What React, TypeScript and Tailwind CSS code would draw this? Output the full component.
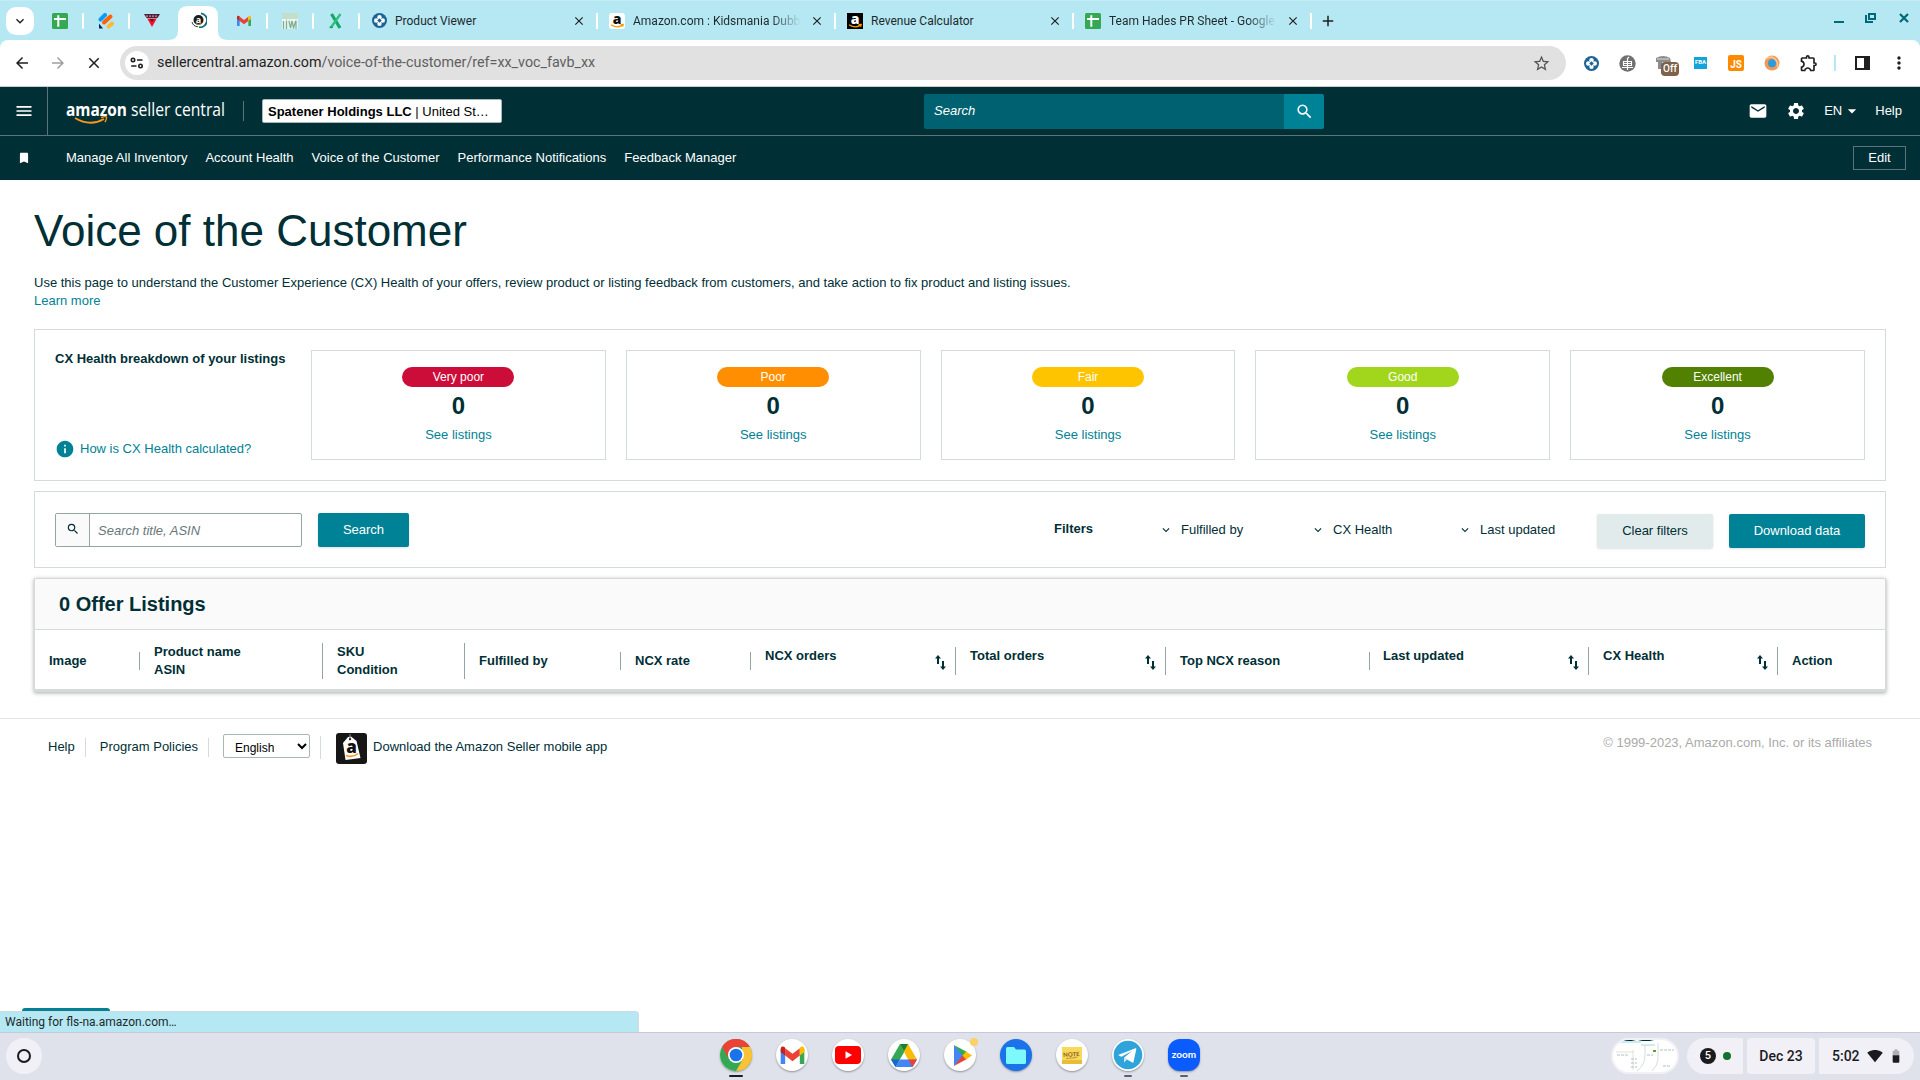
import React from 'react';
import { MdArrowBack, MdArrowForward, MdClose, MdMail, MdSettings, MdSearch, MdMenu, MdBookmark, MdStarBorder, MdMoreVert, MdAdd, MdKeyboardArrowDown, MdInfo, MdOutlineExtension, MdSignalWifi4Bar, MdBattery60, MdArrowDropDown } from 'react-icons/md';

const HEALTH = [
  { label: 'Very poor', color: 'bg-[#cc0c39]' },
  { label: 'Poor', color: 'bg-[#ff8f00]' },
  { label: 'Fair', color: 'bg-[#ffc400]' },
  { label: 'Good', color: 'bg-[#a2d61c]' },
  { label: 'Excellent', color: 'bg-[#528000]' },
];

const COLUMNS = [
  { lines: ['Image'], width: 'w-[105px] pl-[14px]', bar: 'h-[18px]' },
  { lines: ['Product name', 'ASIN'], width: 'w-[183px] pl-[14px]', bar: 'h-9' },
  { lines: ['SKU', 'Condition'], width: 'w-[142px] pl-[14px]', bar: 'h-9' },
  { lines: ['Fulfilled by'], width: 'w-[156px] pl-[14px]', bar: 'h-[18px]' },
  { lines: ['NCX rate'], width: 'w-[130px] pl-[14px]', bar: 'h-[18px]' },
  { lines: ['NCX orders'], width: 'w-[205px] pl-[14px]', bar: 'h-7', sort: true },
  { lines: ['Total orders'], width: 'w-[210px] pl-[14px]', bar: 'h-7', sort: true },
  { lines: ['Top NCX reason'], width: 'w-[204px] pl-[14px]', bar: 'h-[18px]' },
  { lines: ['Last updated'], width: 'w-[219px] pl-[13px]', bar: 'h-7', sort: true },
  { lines: ['CX Health'], width: 'w-[189px] pl-[14px]', bar: 'h-7', sort: true },
  { lines: ['Action'], width: 'w-[107px] pl-[14px]', bar: '' },
];

const NAV = ['Manage All Inventory', 'Account Health', 'Voice of the Customer', 'Performance Notifications', 'Feedback Manager'];

const SheetsIcon = () => (
  <svg width="16" height="16" viewBox="0 0 16 16">
    <rect width="16" height="16" rx="1.5" fill="#34a853" />
    <path d="M2 6h12M6.3 2.3v11.4" stroke="#fff" strokeWidth="2" />
  </svg>
);

const StripesIcon = () => (
  <svg width="16" height="16" viewBox="0 0 16 16" strokeLinecap="round">
    <path d="M2.500 6.500L7 2" stroke="#0a9cff" strokeWidth="4" />
    <path d="M6 9.500L12.500 3.500" stroke="#ff6200" strokeWidth="4" />
    <path d="M10.500 13.500L14 10.500" stroke="#ffb92e" strokeWidth="3.800" />
    <path d="M1 10.500L5 15.500H1z" fill="#0a2463" />
  </svg>
);

const TriangleIcon = () => (
  <svg width="16" height="16" viewBox="0 0 16 16">
    <path d="M0 1h16l-2.500 4h-11z" fill="#47213f" />
    <path d="M2 3.200h12" stroke="#e08b86" strokeWidth="1.200" strokeDasharray="2 1" />
    <path d="M3.200 5.500h9.600L8 14z" fill="#f5102c" />
    <path d="M5.500 6h5L8 9z" fill="#5c1a2c" />
  </svg>
);

const SellerIcon = () => (
  <svg width="16" height="16" viewBox="0 0 16 16">
    <circle cx="7.500" cy="8" r="5" fill="#1d1d1d" />
    <path d="M10 1.300A7 7 0 0 1 8 15.200" stroke="#12707c" strokeWidth="1.800" fill="none" />
    <path d="M1 10a7 6 0 0 0 6 4.800" stroke="#25424a" strokeWidth="1" fill="none" />
    <text x="7.500" y="10.800" fontSize="9" fontWeight="700" fontFamily="Open Sans, sans-serif" fill="#fff" textAnchor="middle">a</text>
    <path d="M4.500 11.500q3 2 6 0" stroke="#d08b3c" strokeWidth="1" fill="none" />
  </svg>
);

const GmailIcon = ({ size = 16 }: { size?: number }) => (
  <svg width={size} height={size} viewBox="0 0 24 24">
    <path d="M1.500 6v13.500h4V11z" fill="#4285f4" />
    <path d="M22.500 6v13.500h-4V11z" fill="#34a853" />
    <path d="M5.500 5.500v6.500L12 17l6.500-5V5.500L12 10.500z" fill="#ea4335" />
    <path d="M1.500 6.300C1.500 3.500 4 3.500 5.500 5v7l-4-3z" fill="#c5221f" />
    <path d="M22.500 6.300c0-2.800-2.500-2.800-4-1.300v7l4-3z" fill="#fbbc04" />
  </svg>
);

const GrassIcon = () => (
  <svg width="16" height="16" viewBox="0 0 16 16">
    <rect width="16" height="16" fill="#e6f4ee" />
    <rect width="16" height="6" fill="#c3dfc9" />
    <path d="M1.500 8v8M4.500 6v10M7 8l1.500 7L10 8l1.500 7L14 7v9" stroke="#7cae92" strokeWidth="1.200" fill="none" />
    <path d="M0 7h6M10 7h5" stroke="#fff" />
  </svg>
);

const XIcon = () => (
  <svg width="16" height="16" viewBox="0 0 16 16">
    <path d="M3.500 1L12 15" stroke="#14a867" strokeWidth="3.200" />
    <path d="M12.500 1L2.500 15" stroke="#28c07b" strokeWidth="2.200" />
    <path d="M1.500 14.300h3.500" stroke="#14a867" strokeWidth="1.400" />
  </svg>
);

const FlowerIcon = () => (
  <svg width="15" height="15" viewBox="0 0 15 15">
    <circle cx="7.500" cy="7.500" r="7.500" fill="#1d6496" />
    <g fill="#fff">
      <circle cx="7.500" cy="4.200" r="2.200" />
      <circle cx="7.500" cy="10.800" r="2.200" />
      <circle cx="4.200" cy="7.500" r="2.200" />
      <circle cx="10.800" cy="7.500" r="2.200" />
    </g>
    <path d="M7.500 5.500v4M5.500 7.500h4" stroke="#1d6496" strokeWidth="1.200" />
  </svg>
);

const AmazonIcon = ({ dark = false }: { dark?: boolean }) => (
  <svg width="16" height="16" viewBox="0 0 16 16">
    <rect width="16" height="16" rx={dark ? 0 : 3} fill={dark ? '#000' : '#fff'} />
    <text x="8" y="10.500" fontSize="14" fontWeight="800" fontFamily="Open Sans, sans-serif" fill={dark ? '#fff' : '#111'} textAnchor="middle">a</text>
    <path d="M2 11.800q6 3.800 11 .6M11.500 11.600l2.700-.2-.7 2.300" stroke="#ff9900" strokeWidth="1.300" fill="none" />
  </svg>
);

const PINNED = [
  { icon: <SheetsIcon />, bar: true },
  { icon: <StripesIcon />, bar: true },
  { icon: <TriangleIcon />, bar: false },
  { icon: <SellerIcon />, active: true },
  { icon: <GmailIcon />, bar: true },
  { icon: <GrassIcon />, bar: true },
  { icon: <XIcon />, bar: true },
];

const TABS = [
  { icon: <FlowerIcon />, title: 'Product Viewer', fade: false },
  { icon: <AmazonIcon />, title: 'Amazon.com : Kidsmania Dubble', fade: true },
  { icon: <AmazonIcon dark />, title: 'Revenue Calculator', fade: false },
  { icon: <SheetsIcon />, title: 'Team Hades PR Sheet - Google S', fade: true },
];

const TabStrip = () => (
  <div className="flex h-10 items-center border-t border-[#c2ecf5] bg-[#b5e8f3] pl-1.5">
    <button className="mr-[4px] flex h-7 w-7 items-center justify-center rounded-[10px] bg-white">
      <MdKeyboardArrowDown className="h-4 w-4 text-[#1f1f1f]" />
    </button>
    {PINNED.map((tab, i) =>
      tab.active ? (
        <div key={i} className="relative flex h-[34px] w-[46px] items-center justify-center self-end">
          <svg className="absolute bottom-0 -left-[8px]" width="60" height="34" viewBox="0 0 60 34">
            <path d="M0 34q10 0 10-9V10Q10 0 20 0h20q10 0 10 10v15q0 9 10 9z" fill="#fff" />
          </svg>
          <span className="relative -top-[3px]">{tab.icon}</span>
        </div>
      ) : (
        <div key={i} className="flex w-[46px] items-center justify-between">
          <span className="ml-[14px] shrink-0">{tab.icon}</span>
          {tab.bar && <span className="h-4 w-[2px] rounded bg-white" />}
        </div>
      )
    )}
    {TABS.map((tab) => (
      <div key={tab.title} className="flex h-4 w-[238px] items-center border-r-2 border-white pl-[11px]">
        <span className="flex w-4 shrink-0 justify-center">{tab.icon}</span>
        <span className={`ml-2 w-[168px] overflow-hidden whitespace-nowrap text-xs text-[#1f2a2d] ${tab.fade ? '[mask-image:linear-gradient(to_right,black_138px,transparent_168px)]' : ''}`}>
          {tab.title}
        </span>
        <MdClose className="ml-[9px] h-3.5 w-3.5 shrink-0 text-[#1f1f1f]" />
      </div>
    ))}
    <MdAdd className="ml-[7px] h-[18px] w-[18px] text-[#1f1f1f]" />
    <div className="mr-2.5 -mt-[5px] ml-auto flex items-center gap-[21px] text-[#006876]">
      <span className="mt-[8px] h-[2px] w-[10px] bg-[#006876]" />
      <svg width="12" height="12" viewBox="0 0 12 12" fill="none" stroke="#006876" strokeWidth="2">
        <path d="M4 2h6v5H4z" />
        <path d="M1 3v7h7" />
      </svg>
      <svg width="12" height="12" viewBox="0 0 12 12" stroke="#006876" strokeWidth="2.200">
        <path d="M2 2l8 8M10 2l-8 8" />
      </svg>
    </div>
  </div>
);

const Toolbar = () => (
  <div className="bg-[#b5e8f3]">
    <div className="flex h-[47px] items-center rounded-t-lg border-b border-[#c9cccd] bg-white pl-[13px]">
      <MdArrowBack className="h-[18px] w-[18px] text-[#1f1f1f]" />
      <MdArrowForward className="ml-[18px] h-[18px] w-[18px] text-[#a0a0a0]" />
      <MdClose className="ml-[18px] h-[18px] w-[18px] text-[#1f1f1f]" />
      <div className="ml-[17px] flex h-[34px] w-[1446px] items-center rounded-full bg-[#e1e1e1] pr-[15px] pl-[5px]">
        <span className="flex h-6 w-6 items-center justify-center rounded-full bg-white">
          <svg width="14" height="12" viewBox="0 0 14 12" fill="none" stroke="#1f1f1f" strokeWidth="1.600">
            <circle cx="3" cy="3" r="1.700" />
            <path d="M7 3h5.500M1.200 9h5.300" />
            <circle cx="10.500" cy="9" r="1.700" />
          </svg>
        </span>
        <span className="ml-2 text-[14.300px] text-[#5f5f5f]">
          <span className="text-[#1f1f1f]">sellercentral.amazon.com</span>/voice-of-the-customer/ref=xx_voc_favb_xx
        </span>
        <MdStarBorder className="ml-auto h-[19px] w-[19px] text-[#555]" />
      </div>
      <div className="ml-[18px] flex items-center">
        <FlowerIcon />
        <svg className="ml-5" width="17" height="17" viewBox="0 0 17 17">
          <circle cx="8.500" cy="8.500" r="8.200" fill="#717171" />
          <path d="M4.500 6.500h8v4h-8zM8.500 4v11M3 12.500h11M4.500 8.500h8M8 4l2-2" stroke="#fff" fill="none" strokeWidth="1.100" />
        </svg>
        <div className="relative ml-[19px] h-4 w-5">
          <svg width="20" height="16" viewBox="0 0 20 16">
            <path d="M1 3q7-4 14 0l1 4H7v7H3V7H1z" fill="#8c8c8c" />
            <path d="M2 4h12" stroke="#ddd" />
          </svg>
          <span className="absolute top-[7px] left-[6px] rounded bg-[#7d6148] px-[2px] text-[10px] leading-[14px] font-medium text-white">Off</span>
        </div>
        <span className="ml-[19px] h-[12px] w-[13px] overflow-hidden bg-[#12a5dc] text-center text-[6px] leading-[9px] font-bold text-white">FBA</span>
        <span className="ml-[21px] flex h-4 w-4 items-end justify-center rounded-xs bg-[#ff8a00] text-[10px] leading-[13px] font-bold text-white">JS</span>
        <svg className="ml-5" width="16" height="16" viewBox="0 0 16 16">
          <circle cx="8" cy="8" r="7.500" fill="#f29a52" />
          <circle cx="8" cy="8.300" r="4" fill="#2d9be0" />
          <path d="M2 4q5-4 9 0t2 8" stroke="#f9cb98" strokeWidth="1.500" fill="none" />
        </svg>
        <MdOutlineExtension className="ml-[19px] h-5 w-5 text-[#1f1f1f]" />
        <span className="ml-[15px] h-4 w-[2px] bg-[#b5e8f3]" />
        <svg className="ml-[19px]" width="15" height="14" viewBox="0 0 15 14">
          <rect x="1" y="1" width="13" height="12" fill="none" stroke="#1f1f1f" strokeWidth="2" />
          <path d="M9 1h5v12H9z" fill="#1f1f1f" />
        </svg>
        <MdMoreVert className="ml-[19px] h-5 w-5 text-[#1f1f1f]" />
      </div>
    </div>
  </div>
);

const Header = () => (
  <div className="h-[93px] bg-[#002f36] text-[13px] text-white">
    <div className="flex h-[49px] items-center border-b border-[#5d7378]">
      <div className="flex h-full w-12 items-center justify-center border-r border-[#5d7378]">
        <MdMenu className="h-5 w-5" />
      </div>
      <svg className="ml-[18px]" width="160" height="30" viewBox="0 0 160 30">
        <text x="0" y="20" fontFamily="Open Sans, sans-serif" fontSize="17" fontWeight="700" fill="#fff" textLength="61" lengthAdjust="spacingAndGlyphs">amazon</text>
        <text x="65" y="20" fontFamily="Open Sans, sans-serif" fontSize="18" fill="#fff" textLength="94" lengthAdjust="spacingAndGlyphs">seller central</text>
        <path d="M9 22q15 9 29 1" stroke="#f7981d" strokeWidth="2" fill="none" />
        <path d="M35 21.500q5-1.500 5.500-.4t-1.500 5" stroke="#f7981d" strokeWidth="1.400" fill="none" />
      </svg>
      <span className="ml-[17px] h-5 w-px bg-[#5d7378]" />
      <div className="ml-[18px] h-6 w-[240px] rounded-xs border border-[#aab7b8] bg-white pl-[5px] text-[13px] leading-[24px] text-black">
        <b>Spatener Holdings LLC</b> | United St…
      </div>
      <div className="ml-[422px] flex h-[35px] w-[400px]">
        <div className="flex w-[360px] items-center rounded-l-xs bg-[#006170] pl-2.5 italic">Search</div>
        <div className="flex w-10 items-center justify-center rounded-r-xs bg-[#008296]">
          <MdSearch className="h-[19px] w-[19px]" />
        </div>
      </div>
      <div className="mr-[18px] ml-auto flex items-center">
        <MdMail className="h-5 w-5" />
        <MdSettings className="ml-[18px] h-5 w-5" />
        <span className="ml-[18px]">EN</span>
        <MdArrowDropDown className="h-5 w-5" />
        <span className="ml-[13px]">Help</span>
      </div>
    </div>
    <div className="flex h-11 items-center">
      <MdBookmark className="ml-[17px] h-3.5 w-3.5" />
      <div className="ml-[35px] flex gap-[18px]">
        {NAV.map((item) => (
          <a key={item}>{item}</a>
        ))}
      </div>
      <button className="mr-3.5 ml-auto h-6 w-[53px] border border-[#5d7378]">Edit</button>
    </div>
  </div>
);

const HealthPanel = () => (
  <section className="mt-[19px] flex h-[152px] border border-[#d5dbdb] p-5">
    <div className="flex w-[256px] flex-col justify-between">
      <h2 className="font-bold leading-[18px]">CX Health breakdown of your listings</h2>
      <a className="mb-px flex items-center text-[#008296]">
        <MdInfo className="mr-[5px] h-5 w-5" />
        How is CX Health calculated?
      </a>
    </div>
    <div className="grid flex-1 grid-cols-5 gap-5">
      {HEALTH.map((item) => (
        <div key={item.label} className="flex flex-col items-center border border-[#d5dbdb] pt-4">
          <span className={`h-5 w-[112px] rounded-full text-center text-xs leading-5 text-white ${item.color}`}>{item.label}</span>
          <span className="mt-[5px] text-[24px] leading-[28px] font-bold">0</span>
          <a className="mt-[6px] leading-[18px] text-[#008296]">See listings</a>
        </div>
      ))}
    </div>
  </section>
);

const FilterItem = ({ label, className }: { label: string; className: string }) => (
  <div className={`flex items-center pt-px ${className}`}>
    <MdKeyboardArrowDown className="mr-2 h-3.5 w-3.5" />
    {label}
  </div>
);

const FilterBar = () => (
  <section className="mt-2.5 flex h-[77px] items-center border border-[#d5dbdb] px-5">
    <div className="flex h-[34px] w-[247px] rounded-xs border border-[#95a5a6]">
      <div className="flex w-[34px] items-center justify-center border-r border-[#95a5a6] bg-[#fafafa]">
        <MdSearch className="-mt-0.5 h-3.5 w-3.5" />
      </div>
      <span className="pl-2 leading-[33px] text-[#687778] italic">Search title, ASIN</span>
    </div>
    <button className="ml-4 h-[34px] w-[91px] rounded-xs bg-[#008296] text-white shadow-sm">Search</button>
    <div className="ml-auto flex h-[34px] items-center">
      <b className="w-[105px] -mt-0.5">Filters</b>
      <FilterItem label="Fulfilled by" className="w-[152px]" />
      <FilterItem label="CX Health" className="w-[147px]" />
      <FilterItem label="Last updated" className="w-[139px]" />
      <button className="mt-0.5 h-[34px] w-[116px] rounded-xs bg-[#e1ebeb] shadow-sm">Clear filters</button>
      <button className="mt-0.5 ml-4 h-[34px] w-[136px] rounded-xs bg-[#008296] text-white shadow-sm">Download data</button>
    </div>
  </section>
);

const SortIcon = () => (
  <svg className="mt-1 mr-[9px]" width="11" height="15" viewBox="0 0 11 15" fill="#002f36">
    <path d="M3 0l3 3.500H4V9H2V3.500H0z" />
    <path d="M8 15l-3-3.500h2V6h2v5.500h2z" />
  </svg>
);

const ListingsTable = () => (
  <section className="mt-2.5 h-[114px] border border-b-[3px] border-[#d5dbdb] shadow-[0_1px_4px_rgba(0,0,0,0.35)]">
    <h2 className="h-[51px] border-b border-[#d5dbdb] bg-[#fafafa] pl-6 text-[20px] leading-[50px] font-bold">0 Offer Listings</h2>
    <div className="flex h-[61px] items-center font-bold">
      {COLUMNS.map((col) => (
        <div key={col.lines[0]} className={`flex shrink-0 items-center justify-between ${col.width}`}>
          <div className={`leading-[18px] ${col.sort ? '-mt-[9px]' : 'mt-px'}`}>
            {col.lines.map((line) => (
              <div key={line}>{line}</div>
            ))}
          </div>
          <div className="flex items-center">
            {col.sort && <SortIcon />}
            {col.bar && <span className={`w-px bg-[#95a5a6] ${col.bar}`} />}
          </div>
        </div>
      ))}
    </div>
  </section>
);

const Footer = () => (
  <footer className="mt-[26px] flex h-[60px] border-t border-[#e2e4e4] pl-12 text-[13px] text-[#002f36]">
    <div className="flex h-14 items-center">
      <span>Help</span>
      <span className="ml-2.5 h-[19px] w-px bg-[#d5dbdb]" />
      <span className="ml-[14px]">Program Policies</span>
      <span className="ml-2.5 h-[19px] w-px bg-[#d5dbdb]" />
      <div className="mb-[2px] ml-[14px] flex h-6 w-[87px] items-center justify-between rounded-xs border border-[#aab7b8] pt-1 pr-0.5 pl-[11px] text-xs text-black">
        <span className="h-[16px] overflow-hidden">English</span>
        <svg className="mb-1" width="10" height="7" viewBox="0 0 10 7" fill="none" stroke="#000" strokeWidth="2">
          <path d="M1 1l4 4 4-4" />
        </svg>
      </div>
      <span className="ml-2.5 h-[23px] w-px bg-[#d5dbdb]" />
      <svg className="mt-0.5 ml-[15px]" width="31" height="31" viewBox="0 0 31 31">
        <rect width="31" height="31" rx="3" fill="#161616" />
        <path d="M7 10l5-6 3-.5 5.500 4.500 4 17-15 2z" fill="#fff" />
        <circle cx="14" cy="6" r="1.200" fill="#161616" />
        <path d="M14 6V1" stroke="#888" strokeWidth="1" />
        <text x="15.500" y="20" fontSize="17" fontWeight="800" fontFamily="Open Sans, sans-serif" fill="#111" textAnchor="middle">a</text>
        <path d="M10 22.500q7 2.500 12-2" stroke="#f7981d" strokeWidth="1.600" fill="none" />
      </svg>
      <span className="ml-1.5">Download the Amazon Seller mobile app</span>
    </div>
    <span className="mr-[48px] ml-auto pt-[14px] text-[#aaaaaa]">© 1999-2023, Amazon.com, Inc. or its affiliates</span>
  </footer>
);

const APPS = [
  {
    name: 'chrome',
    mark: 'active',
    icon: (
      <svg width="32" height="32" viewBox="0 0 32 32">
        <circle cx="16" cy="16" r="16" fill="#34a853" />
        <path d="M2.140 8A16 16 0 0 1 29.860 8H16L9 20z" fill="#ea4335" />
        <path d="M29.860 8A16 16 0 0 1 16 32l7-12-1-12z" fill="#fbc333" />
        <circle cx="16" cy="16" r="8" fill="#fff" />
        <circle cx="16" cy="16" r="6.300" fill="#1a73e8" />
      </svg>
    ),
  },
  { name: 'gmail', icon: <GmailIcon size={27} /> },
  {
    name: 'youtube',
    icon: (
      <svg width="26" height="18" viewBox="0 0 26 18">
        <rect width="26" height="18" rx="4" fill="#f00" />
        <path d="M10.500 5.200v7.600L17 9z" fill="#fff" />
      </svg>
    ),
  },
  {
    name: 'drive',
    icon: (
      <svg width="26" height="23" viewBox="0 0 26 23">
        <path d="M9 0L0 15.500 4.500 23 13.500 7.600z" fill="#34a853" />
        <path d="M9 0h8l-4 7.500z" fill="#188038" />
        <path d="M9 0h8l9 15.500h-9L9 0z" fill="#fbbc04" />
        <path d="M9 0h8l-4 7.300z" fill="#188038" />
        <path d="M9 15.500h12.500L26 15.500 21.500 23h-17z" fill="#4285f4" />
        <path d="M17.300 15.500H26L21.500 23z" fill="#ea4335" />
        <path d="M0 15.500h8.700L4.500 23z" fill="#1967d2" />
      </svg>
    ),
  },
  {
    name: 'play',
    badge: true,
    icon: (
      <svg className="ml-1" width="19" height="21" viewBox="0 0 19 21">
        <path d="M1 0v21l10-10.500z" fill="#4285f4" />
        <path d="M1 0l13 7-4 4z" fill="#34a853" />
        <path d="M1 21l13-7-4-4z" fill="#ea4335" />
        <path d="M13 6.500l6 4-6 4-3.500-4z" fill="#fbbc04" />
      </svg>
    ),
  },
  {
    name: 'files',
    bg: 'bg-[#1a73e8]',
    icon: (
      <svg width="20" height="17" viewBox="0 0 20 17">
        <path d="M0 1.500Q0 0 1.500 0H8l2 2.500h8.500Q20 2.500 20 4v11.500q0 1.500-1.500 1.500h-17Q0 17 0 15.500z" fill="#7df9fb" />
      </svg>
    ),
  },
  {
    name: 'note',
    icon: (
      <svg width="20" height="17" viewBox="0 0 20 17">
        <path d="M0 0h20v17H0z" fill="#f8d95a" />
        <path d="M0 13h20v4H0z" fill="#e9bd3c" />
        <text x="9.500" y="9.500" fontSize="6" fontWeight="700" fontFamily="Lato, sans-serif" fill="#8a5c1e" textAnchor="middle" transform="rotate(-4 9 9)">NOTE</text>
        <path d="M4 11.500l11-1" stroke="#b5812d" strokeWidth=".8" />
      </svg>
    ),
  },
  {
    name: 'telegram',
    mark: 'open',
    icon: (
      <svg width="32" height="32" viewBox="0 0 32 32">
        <circle cx="16" cy="16" r="14.300" fill="#2fa3dc" />
        <path d="M6 16L23.500 9.200q1-.2.800 1L21.500 23q-.3 1-1.300.5L12 18.800 20 12l-10.500 5.700z" fill="#fff" />
        <path d="M12 18.500v5l3-3z" fill="#d5e8f3" />
      </svg>
    ),
  },
  {
    name: 'zoom',
    mark: 'open',
    bg: 'bg-[#0b5cff]',
    icon: <span className="pb-0.5 font-[Lato] text-[10px] font-bold text-white">zoom</span>,
  },
];

const Shelf = () => (
  <div className="flex h-12 items-start border-t border-[#c6c9da] bg-[#dfe1eb] pt-[5px] font-medium text-[#1b1b1f]">
    <div className="ml-1.5 flex h-9 w-9 items-center justify-center rounded-full bg-[#f1f0f7]">
      <span className="h-3.5 w-3.5 rounded-full border-2 border-[#1b1b1f]" />
    </div>
    <div className="ml-[678px] flex gap-6">
      {APPS.map((app) => (
        <div key={app.name} className="relative mt-px flex flex-col items-center">
          <div className={`flex h-8 w-8 items-center justify-center shadow-[0_1px_2px_rgba(0,0,0,0.35)] ${app.name === 'zoom' ? 'rounded-[12px]' : 'rounded-full'} ${app.bg ?? 'bg-white'}`}>
            {app.icon}
          </div>
          {app.badge && <span className="absolute -top-px -right-0.5 h-2 w-2 rounded-full bg-[#fcd163]" />}
          {app.mark === 'active' && <span className="mt-1 h-0.5 w-3.5 rounded bg-[#1b1b1f]" />}
          {app.mark === 'open' && <span className="mt-1 h-0.5 w-2 rounded bg-[#5b6079]" />}
        </div>
      ))}
    </div>
    <div className="mr-1.5 ml-auto flex">
      <div className="flex h-9 w-[68px] items-center overflow-hidden rounded-full border-2 border-[#f1f0f7] bg-white">
        <svg width="64" height="32" viewBox="0 0 64 32">
          <path d="M7 1q8-2.500 16 0zM25 1q8-2.500 16 0z" fill="#002f36" />
          <path d="M4 2h24M28 5h14" stroke="#cdebf0" strokeWidth="2" />
          <path d="M3 12h18M20 10v20" stroke="#eadfd3" />
          <path d="M4 15h12M18 19h6M18 23h6M18 27h6M34 15h6M47 10h14M50 26h8" stroke="#a8c4c8" strokeDasharray="3 1" />
          <path d="M40 11h3" stroke="#6a9a1f" strokeWidth="2" />
          <path d="M32 5v10q0 10-8 16M45 3v16q0 6-6 12" stroke="#d9dcdc" fill="none" />
        </svg>
      </div>
      <div className="ml-2 flex h-9 w-14 items-center rounded-l-full rounded-r-sm bg-[#f1f0f7] pl-[13px]">
        <span className="flex h-4 w-4 items-center justify-center rounded-full bg-[#1b1b1f] text-[11px] text-white">5</span>
        <span className="ml-[7px] h-2 w-2 rounded-full bg-[#15702c]" />
      </div>
      <div className="ml-1 flex h-9 w-[68px] items-center justify-center rounded-sm bg-[#f1f0f7] text-sm">Dec 23</div>
      <div className="ml-1 flex h-9 w-[95px] items-center rounded-l-sm rounded-r-full bg-[#f1f0f7] pl-[13px] text-sm">
        5:02
        <MdSignalWifi4Bar className="ml-[7px] h-4 w-4" />
        <MdBattery60 className="ml-[5px] h-4 w-4" />
      </div>
    </div>
  </div>
);

const App: React.FC = () => {
  return (
    <div className="flex h-[1080px] w-[1920px] flex-col overflow-hidden bg-white font-[Roboto,sans-serif]">
      <TabStrip />
      <Toolbar />
      <div className="relative flex-1 font-['Liberation_Sans',Arial,sans-serif] text-[13px] text-[#002f36]">
        <Header />
        <main className="px-[34px] pt-[26px]">
          <h1 className="h-[68px] text-[44px] leading-[50px]">Voice of the Customer</h1>
          <p className="leading-[18px]">
            Use this page to understand the Customer Experience (CX) Health of your offers, review product or listing feedback from customers, and take action to fix product and listing issues.
          </p>
          <a className="block leading-[18px] text-[#008296]">Learn more</a>
          <HealthPanel />
          <FilterBar />
          <ListingsTable />
        </main>
        <Footer />
        {/* Loading status over the page */}
        <div className="absolute bottom-0 left-0 w-[639px]">
          <div className="ml-[22px] h-[3px] w-[88px] rounded-t-sm bg-[#008296]" />
          <div className="h-[21px] rounded-tr border-t border-r border-[#d0dadd] bg-[#b5e8f3] pl-[5px] font-[Roboto,sans-serif] text-xs leading-[20px] text-[#1f2a2d]">
            Waiting for fls-na.amazon.com…
          </div>
        </div>
      </div>
      <Shelf />
    </div>
  );
};

export default App;
